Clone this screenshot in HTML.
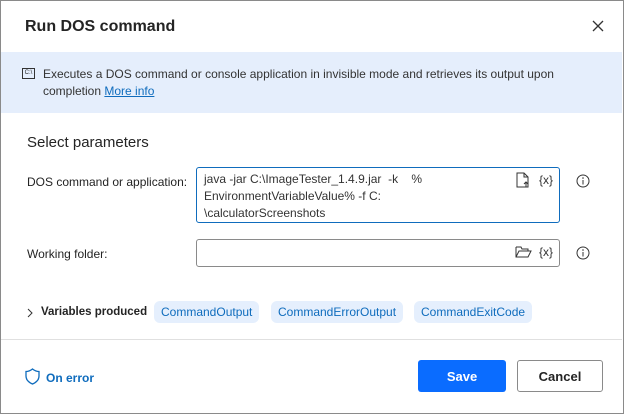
<!DOCTYPE html>
<html><head><style>
*{margin:0;padding:0;box-sizing:border-box}
body{width:624px;height:414px;background:#fff;font-family:"Liberation Sans",sans-serif;color:#242424;position:relative;overflow:hidden;font-size:12px}
.frame{position:absolute;inset:0;border:1px solid #8a8a8a}
.abs{position:absolute}
.title{left:25px;top:18px;font-size:16px;font-weight:bold}
.band{left:1px;top:52px;width:621px;height:61px;background:#e5eefc}
.box{border:1px solid #8a8a8a;border-radius:3px;background:#fff}
.chip{top:301px;height:22px;background:#e5effd;color:#0f6cbd;border-radius:6px;font-size:12px;line-height:22px;padding:0 7px}
.btn{top:360px;height:32px;border-radius:3px;font-size:13px;font-weight:bold;text-align:center;line-height:34px}
</style></head><body>
<div class="frame"></div>
<div class="abs title">Run DOS command</div>
<svg class="abs" style="left:592px;top:20px" width="12" height="12"><path d="M1 1L11 11M11 1L1 11" stroke="#333" stroke-width="1.3"/></svg>
<div class="abs band"></div>
<div class="abs" style="left:22px;top:68px;width:13px;height:11px;border:1px solid #333;font-size:6px;line-height:9px;text-align:center">C:\</div>
<div class="abs" style="left:43px;top:66px;width:540px;line-height:17px;font-size:12px;color:#333">Executes a DOS command or console application in invisible mode and retrieves its output upon completion <span style="color:#0f6cbd;text-decoration:underline">More info</span></div>
<div class="abs" style="left:27px;top:134px;font-size:15px">Select parameters</div>
<div class="abs" style="left:27px;top:175px;font-size:12px">DOS command or application:</div>
<div class="abs box" style="left:196px;top:167px;width:364px;height:56px;border-color:#0f6cbd"></div>
<div class="abs" style="left:204px;top:171px;line-height:17px;font-size:12px;color:#333">java -jar C:\ImageTester_1.4.9.jar &nbsp;-k &nbsp;&nbsp;&nbsp;%<br>EnvironmentVariableValue% -f C:<br>\calculatorScreenshots</div>
<svg class="abs" style="left:516px;top:172px" width="14" height="16"><path d="M1 1H8L12 5V15H1Z M8 1V5H12" fill="none" stroke="#333"/><path d="M10 15V10M8 12L10 10L12 12" stroke="#333" fill="none"/></svg>
<div class="abs" style="left:539px;top:173px;font-size:12px;color:#333">{x}</div>
<svg class="abs" style="left:576px;top:174px" width="14" height="14"><circle cx="7" cy="7" r="6" fill="none" stroke="#333"/><path d="M7 6V10.5" stroke="#333"/><circle cx="7" cy="4" r=".8" fill="#333"/></svg>
<div class="abs" style="left:27px;top:247px">Working folder:</div>
<div class="abs box" style="left:196px;top:239px;width:364px;height:28px"></div>
<svg class="abs" style="left:515px;top:245px" width="17" height="13"><path d="M1 2H6L7 4H13V6 M1 2V12H13L16 6H4L1 12" fill="none" stroke="#333"/></svg>
<div class="abs" style="left:539px;top:245px;color:#333">{x}</div>
<svg class="abs" style="left:576px;top:246px" width="14" height="14"><circle cx="7" cy="7" r="6" fill="none" stroke="#333"/><path d="M7 6V10.5" stroke="#333"/><circle cx="7" cy="4" r=".8" fill="#333"/></svg>
<svg class="abs" style="left:26px;top:308px" width="8" height="10"><path d="M2 1L6 5L2 9" fill="none" stroke="#333"/></svg>
<div class="abs" style="left:41px;top:306px;font-weight:bold;font-size:11.5px">Variables produced</div>
<div class="abs chip" style="left:154px">CommandOutput</div>
<div class="abs chip" style="left:271px">CommandErrorOutput</div>
<div class="abs chip" style="left:414px">CommandExitCode</div>
<div class="abs" style="left:1px;top:339px;width:621px;height:1px;background:#e0e0e0"></div>
<svg class="abs" style="left:25px;top:368px" width="15" height="17"><path d="M7.5 1C5 3 3 3.5 1 3.5V8C1 12 4 14.5 7.5 16C11 14.5 14 12 14 8V3.5C12 3.5 10 3 7.5 1Z" fill="none" stroke="#0f6cbd" stroke-width="1.3"/></svg>
<div class="abs" style="left:46px;top:371px;color:#0f6cbd;font-weight:bold">On error</div>
<div class="abs btn" style="left:418px;width:88px;background:#0a6cff;color:#fff">Save</div>
<div class="abs btn" style="left:517px;width:86px;border:1px solid #8a8a8a;color:#242424;line-height:32px">Cancel</div>
</body></html>
